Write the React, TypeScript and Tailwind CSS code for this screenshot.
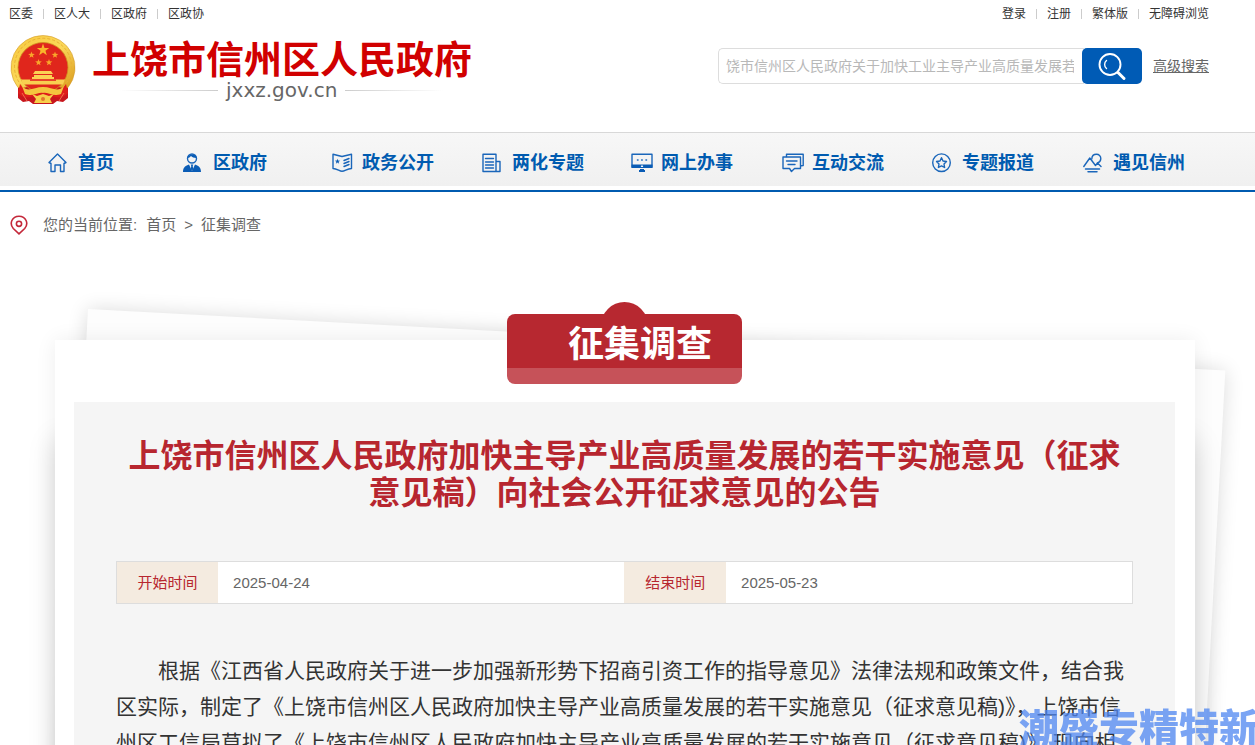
import type { ReactNode } from 'react';

const starPoints = (cx: number, cy: number, r: number) =>
  Array.from({ length: 10 }, (_, i) => {
    const a = (Math.PI / 5) * i - Math.PI / 2;
    const k = i % 2 === 0 ? r : r * 0.4;
    return `${(cx + k * Math.cos(a)).toFixed(2)},${(cy + k * Math.sin(a)).toFixed(2)}`;
  }).join(' ');

function Emblem() {
  return (
    <svg viewBox="0 0 66 70" className="h-[70px] w-[66px] shrink-0" aria-hidden="true">
      <defs>
        <linearGradient id="gold" x1="0" y1="0" x2="1" y2="1">
          <stop offset="0" stopColor="#f7c93c" />
          <stop offset="0.5" stopColor="#fbd85a" />
          <stop offset="1" stopColor="#d99a1c" />
        </linearGradient>
      </defs>
      <path d="M8 46 L8 63 L13 67 L19 66 L23 69 H43 L47 66 L53 67 L58 63 L58 46Z" fill="#c8161d" />
      <path
        d="M33 0.500 A32 32 0 0 0 8 52.500 C14 54 18 50 22 52 H44 C48 50 52 54 58 52.500 A32 32 0 0 0 33 0.500Z"
        fill="url(#gold)"
        stroke="#d39a2a"
        strokeWidth="0.600"
      />
      <path d="M12 51 A28.500 28.500 0 1 1 54 51" fill="none" stroke="#eab035" strokeWidth="1" strokeDasharray="3 2" />
      <circle cx="33" cy="32.500" r="25" fill="#e0261c" stroke="#cf8f1f" strokeWidth="0.800" />
      <polygon points={starPoints(33, 15, 6.5)} fill="#f9b52b" />
      <polygon points={starPoints(21.5, 20, 3.5)} fill="#f9a52b" />
      <polygon points={starPoints(45, 20, 3.5)} fill="#f9a52b" />
      <polygon points={starPoints(28.5, 27.5, 3.5)} fill="#f9a52b" />
      <polygon points={starPoints(39, 27.5, 3.5)} fill="#f9a52b" />
      <path d="M25 36 H41 L43 39 H23Z M24 40 H42 V42 H44 V44 H22 V42 H24Z" fill="#fbd054" />
      <path d="M11 44.500 H55 L53 49.500 H13Z" fill="#f8cf50" />
      <path d="M20 44 H46 V46 H20Z" fill="#e8452a" />
      <path d="M10 49 C17 60 24 54 33 54 C42 54 49 60 56 49 L58 58 C50 67 44 59 33 61 C22 59 16 67 8 58Z" fill="#df1d1a" />
      <path d="M12 51 C18 58 24 52 33 52 C42 52 48 58 54 51 L51 59 C42 62 38 57 33 58 C28 57 24 62 15 59Z" fill="#f4c53e" />
      <path d="M22 59 L27 61 L33 59 L39 61 L44 59 L40 64 L42 68 H24 L26 64Z" fill="#f7cf4a" />
      <circle cx="33" cy="64" r="2" fill="#e2762c" />
      <path d="M12 58 L17 66 M54 58 L49 66" stroke="#ef6a4a" strokeWidth="1" />
    </svg>
  );
}

function NavIcon({ children }: { children: ReactNode }) {
  return (
    <svg
      viewBox="0 0 22 20"
      className="h-5 w-[22px]"
      fill="none"
      stroke="#1a66ba"
      strokeWidth="1.400"
      strokeLinejoin="round"
      strokeLinecap="round"
      aria-hidden="true"
    >
      {children}
    </svg>
  );
}

const navItems: { label: string; icon: ReactNode }[] = [
  {
    label: '首页',
    icon: <path d="M1 9.500 L9.500 1 L18 9.500 L16 10.500 V18.500 H12.500 V12 H7 V18.500 H3 V10.500Z" />,
  },
  {
    label: '区政府',
    icon: (
      <>
        <circle cx="9" cy="5.500" r="4.500" />
        <path d="M4.500 5 C4.500 1 13.500 0 13.500 5 C11 5 9 4 8 3 C7 4 6 5 4.500 5Z" fill="#0a5cb5" stroke="none" />
        <path d="M0 19 C0 14 3 12.500 6 11.500 L9 18 L12 11.500 C15 12.500 18 14 18 19Z" fill="#0a5cb5" stroke="none" />
        <path d="M7.700 11.500 H10.300 L9.700 13 L10.300 16 L9 18 L7.700 16 L8.300 13Z" fill="#0a5cb5" stroke="none" />
      </>
    ),
  },
  {
    label: '政务公开',
    icon: (
      <>
        <path d="M1 1.200 L10 3.500 L19.500 1.200 V15.500 C15 15.500 13 18.300 10 18.300 C7.500 18.300 5 15.500 1 15.500Z" />
        <polygon points={starPoints(5.5, 8.5, 2.8)} fill="#0a5cb5" stroke="none" />
        <path d="M12 7.500 L17 5.500 M12 10.500 L17 8.500 M12 13.500 L17 11.500" />
      </>
    ),
  },
  {
    label: '两化专题',
    icon: (
      <>
        <path d="M14 18.500 H1 V1.200 H14 V18.500 H18 V8.500 H14" />
        <path d="M3.500 5.500 H11.500 M3.500 9 H11.500 M3.500 12 H11.500 M3.500 15 H11.500" />
      </>
    ),
  },
  {
    label: '网上办事',
    icon: (
      <>
        <path d="M1 1.200 H21 V14 H1Z" />
        <path d="M0.500 11.500 H21.500 V15 H0.500Z" fill="#0a5cb5" stroke="none" />
        <path d="M9 16 H13 V17 H14 V19 H8 V17 H9Z" fill="#0a5cb5" stroke="none" />
        <path d="M6.500 7 H7 M10.700 7 H11.200 M15 7 H15.500" strokeWidth="1.600" />
        <path d="M10.500 13.300 H11.500" stroke="#ffffff" />
      </>
    ),
  },
  {
    label: '互动交流',
    icon: (
      <>
        <path d="M4.500 3.500 V1.200 H21.200 V12.500 L19 12.800" />
        <path d="M1 4 H18.500 V15.500 H12.500 L9.500 18.500 L7.500 15.500 H1Z" />
        <path d="M4.500 8 H15 M6 11.500 H13" />
      </>
    ),
  },
  {
    label: '专题报道',
    icon: (
      <>
        <circle cx="9.500" cy="9.700" r="8.800" />
        <polygon points="9.500,4.700 11,8 14.500,8.500 12,11 12.600,14.500 9.500,12.900 6.400,14.500 7,11 4.500,8.500 8,8" />
      </>
    ),
  },
  {
    label: '遇见信州',
    icon: (
      <>
        <path d="M0.800 13.500 L6.800 5 L12.500 12.500 L14.500 10 L18 13.500" />
        <path d="M8.800 6 C9 -0.500 18.200 -0.200 17.800 5.800 C17.500 8.500 16 9.500 14.500 10" />
        <path d="M2.500 16 H16.500 M5 18.700 H14" strokeWidth="1.500" />
      </>
    ),
  },
];

function LinkRow({ items, label }: { items: string[]; label: string }) {
  return (
    <nav aria-label={label}>
      <ul className="flex items-center">
        {items.map((item, i) => (
          <li key={item} className="flex items-center">
            {i > 0 && <span className="mx-[10px] h-[10px] w-px bg-[#cccccc]" />}
            <a href="#" className="text-xs leading-5 text-[#333333]">
              {item}
            </a>
          </li>
        ))}
      </ul>
    </nav>
  );
}

function Header() {
  return (
    <header>
      <div className="flex justify-between pt-1 pr-[46px] pl-[9px]">
        <LinkRow label="机构" items={['区委', '区人大', '区政府', '区政协']} />
        <LinkRow label="用户" items={['登录', '注册', '繁体版', '无障碍浏览']} />
      </div>
      <div className="flex h-[108px] items-start justify-between pr-[46px] pl-[10px]">
        <a href="#" className="flex pt-[11px]">
          <Emblem />
          <span className="ml-4 flex flex-col pt-[5px]">
            <span className="text-[38px] leading-[40px] font-bold text-[#d10000]">上饶市信州区人民政府</span>
            <span className="flex items-center gap-2 pl-7">
              <span className="h-px w-[98px] bg-linear-to-r from-transparent to-[#cccccc]" />
              <span className="font-['DejaVu_Sans'] text-[20px] leading-5 text-[#666666]">jxxz.gov.cn</span>
              <span className="h-px w-[98px] bg-linear-to-l from-transparent to-[#cccccc]" />
            </span>
          </span>
        </a>
        <form className="flex items-center pt-6" onSubmit={(e) => e.preventDefault()}>
          <input
            type="text"
            aria-label="搜索"
            placeholder="饶市信州区人民政府关于加快工业主导产业高质量发展若"
            className="h-9 w-[366px] rounded-l-[5px] border border-r-0 border-[#dddddd] bg-white pr-[10px] pl-[7px] text-sm text-[#333333] outline-none placeholder:text-[#b8b8b8]"
          />
          <button
            type="submit"
            aria-label="搜索"
            className="-ml-0.5 flex h-9 w-[60px] items-center justify-center rounded-[5px] bg-[#005bb5]"
          >
            <svg viewBox="0 0 30 30" className="size-[30px]" fill="none" stroke="#ffffff" strokeLinecap="round" aria-hidden="true">
              <circle cx="13" cy="13.500" r="10.500" strokeWidth="1.900" />
              <path d="M9.500 17.500 C7 15.500 7 11.500 9.500 9.500" strokeWidth="1.400" />
              <path d="M21 21.500 L27 27.500" strokeWidth="3" />
            </svg>
          </button>
          <a href="#" className="ml-[11px] text-sm text-[#666666] underline">
            高级搜索
          </a>
        </form>
      </div>
      <nav aria-label="主导航" className="border-t border-b-2 border-t-[#d8d8d8] border-b-[#005bb0] pb-1">
        <ul className="grid h-[53px] grid-cols-[135fr_149fr_150fr_149fr_151fr_150fr_151fr_172fr] bg-linear-to-b from-[#f7f7f7] to-[#f0f0f0] pl-12">
          {navItems.map((item) => (
            <li key={item.label} className="flex items-center pt-[7px]">
              <a href="#" className="flex items-center gap-2 text-lg leading-6 font-bold whitespace-nowrap text-[#005bb0]">
                <NavIcon>{item.icon}</NavIcon>
                {item.label}
              </a>
            </li>
          ))}
        </ul>
      </nav>
    </header>
  );
}

function Breadcrumb() {
  return (
    <nav aria-label="位置" className="flex items-center pt-[22px] pl-[10px] text-[15px] leading-[22px] text-[#666666]">
      <svg viewBox="0 0 18 20" className="mr-[15px] h-5 w-[18px]" fill="none" stroke="#c4283a" strokeWidth="1.600" aria-hidden="true">
        <path d="M9 18.800 L3.300 13.500 C-1 8.500 2 1.200 9 1.200 C16 1.200 19 8.500 14.700 13.500Z" />
        <circle cx="9" cy="8.800" r="2.600" />
      </svg>
      <span>您的当前位置:</span>
      <a href="#" className="ml-[9px]">
        首页
      </a>
      <span className="mx-2">&gt;</span>
      <a href="#">征集调查</a>
    </nav>
  );
}

function Banner() {
  return (
    <div className="relative mx-auto -mt-[26px] h-[70px] w-[235px]">
      <div className="absolute -top-3 left-[94px] size-[47px] rounded-full bg-[#b72830]" />
      <div className="relative flex h-full items-start overflow-hidden rounded-lg border-b-[16px] border-[#c65259] bg-[#b72830] pl-[61px]">
        <h2 className="text-4xl leading-[62px] font-bold text-white">征集调查</h2>
      </div>
    </div>
  );
}

export default function App() {
  return (
    <div
      lang="zh-CN"
      className="h-screen overflow-x-hidden overflow-y-auto bg-white font-['Liberation_Sans','Noto_Sans_CJK_SC',sans-serif] [scrollbar-width:none]"
    >
      <Header />
      <Breadcrumb />
      <main className="relative isolate pt-[104px] pr-[60px] pl-[55px]">
        <div className="absolute top-[73px] right-[28px] left-[88px] -z-10 h-[900px] origin-top-left rotate-[3.1deg] bg-[#fdfdfd] shadow-[0_0_20px_rgba(0,0,0,0.14)]" />
        <article className="flow-root bg-white pr-5 pb-5 pl-[19px] shadow-[0_0_20px_rgba(0,0,0,0.07),0_100px_26px_rgba(0,0,0,0.15)]">
          <Banner />
          <div className="mt-[18px] bg-[#f5f5f5] px-[42px] pt-9 pb-10">
            <h1 className="text-center text-[32px] leading-[37px] font-bold text-[#b7262f]">
              上饶市信州区人民政府加快主导产业高质量发展的若干实施意见（征求意见稿）向社会公开征求意见的公告
            </h1>
            <table className="mt-[49px] w-full table-fixed border border-[#dddddd] text-[15px] leading-[21px]">
              <tbody>
                <tr className="h-[42px]">
                  <th scope="row" className="w-[10%] bg-[#f4ebe0] font-normal text-[#b7262f]">
                    开始时间
                  </th>
                  <td className="w-[40%] bg-white pl-[15px] text-[#666666]">2025-04-24</td>
                  <th scope="row" className="w-[10%] bg-[#f4ebe0] font-normal text-[#b7262f]">
                    结束时间
                  </th>
                  <td className="w-[40%] bg-white pl-[15px] text-[#666666]">2025-05-23</td>
                </tr>
              </tbody>
            </table>
            <p className="mt-[49px] indent-[2em] text-[21px] leading-9 text-[#333333]">
              根据《江西省人民政府关于进一步加强新形势下招商引资工作的指导意见》法律法规和政策文件，结合我区实际，制定了《上饶市信州区人民政府加快主导产业高质量发展的若干实施意见（征求意见稿)》，上饶市信州区工信局草拟了《上饶市信州区人民政府加快主导产业高质量发展的若干实施意见（征求意见稿)》,现向相
            </p>
          </div>
        </article>
      </main>
      <div className="pointer-events-none fixed right-0 bottom-0 h-[42px] w-[236px] overflow-hidden text-[40px] leading-[52px] font-black whitespace-nowrap text-[#4d85f0]/75">
        潮盛专精特新
      </div>
    </div>
  );
}
